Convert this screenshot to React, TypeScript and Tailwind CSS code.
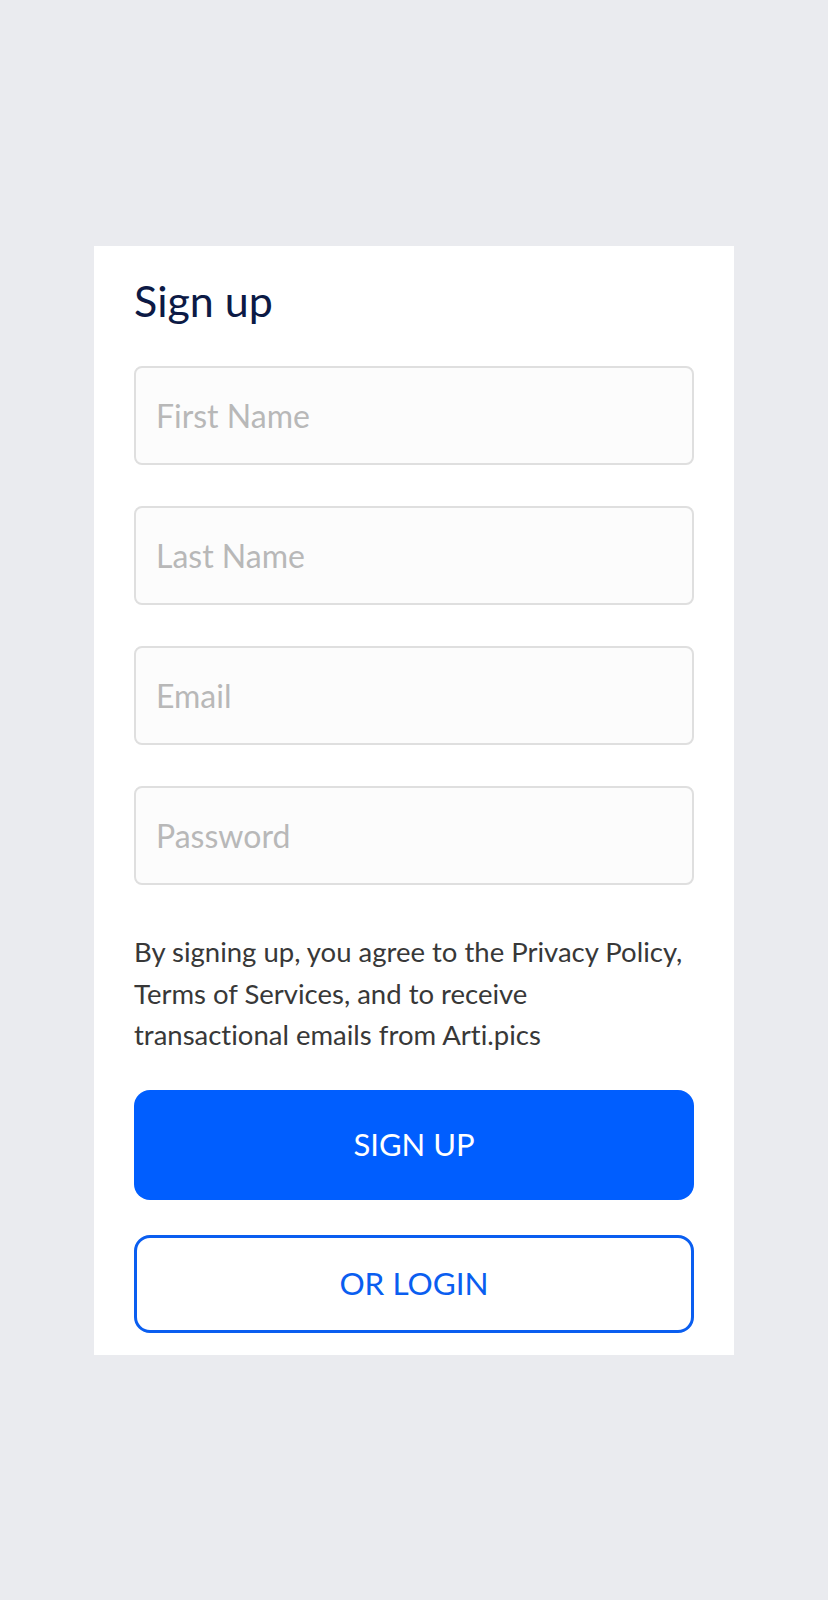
const fields = ["First Name", "Last Name", "Email", "Password"];

const App = () => {
    return (
        <div
            className="min-h-screen w-full bg-[#eaebef] flex justify-center pt-[246px] [font-variant-ligatures:none]"
            style={{ fontFamily: "Lato, 'Noto Sans', sans-serif" }}
        >
            <div className="w-[640px] h-fit bg-white px-10 pt-[31px] pb-[22px] flex flex-col">
                <h1 className="text-[43px] leading-[48px] text-[#0c1a45] font-normal">
                    Sign up
                </h1>

                <div className="mt-[41px] flex flex-col gap-[41px]">
                    {fields.map((name) => (
                        <input
                            key={name}
                            type={name === "Password" ? "password" : "text"}
                            placeholder={name}
                            className="w-full h-[99px] px-5 rounded-lg bg-[#fcfcfc] border-2 border-[#dfdfdf] text-[32px] text-gray-800 placeholder:text-[#b8b8b8] focus:outline-none"
                        />
                    ))}
                </div>

                <p className="mt-[46px] text-[27.5px] leading-[41.5px] text-[#383838]">
                    By signing up, you agree to the Privacy Policy,
                    <br />
                    Terms of Services, and to receive
                    <br />
                    transactional emails from Arti.pics
                </p>

                <button className="mt-[34px] h-[110px] w-full rounded-2xl bg-[#005eff] text-white text-[31px]">
                    SIGN UP
                </button>

                <button className="mt-[35px] h-[98px] w-full rounded-2xl border-[3px] border-[#0a5ef0] bg-white text-[#0a5ef0] text-[31.5px]">
                    OR LOGIN
                </button>
            </div>
        </div>
    );
};

export default App;
